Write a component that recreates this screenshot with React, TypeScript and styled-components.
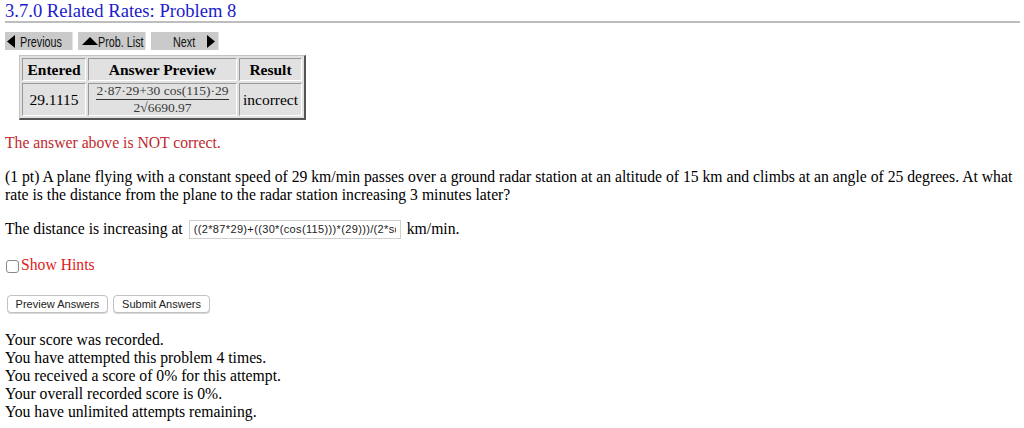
import React from 'react'
import styled, { createGlobalStyle } from 'styled-components'

const GlobalStyle = createGlobalStyle`
  html, body {
    margin: 0;
    padding: 0;
    background: #ffffff;
  }
  body {
    font-family: "Liberation Serif", "Times New Roman", serif;
    font-size: 15.7px;
    color: #000;
  }
`

const Page = styled.div`
  padding: 0 4px 0 5px;
`

const Title = styled.h1`
  margin: 0;
  padding-top: 1px;
  font-size: 18.6px;
  font-weight: normal;
  line-height: 20px;
  color: #1c1ccc;
  border-bottom: 2px solid #bdbdbd;
`

const NavBar = styled.div`
  display: flex;
  gap: 5px;
  margin-top: 9px;
`

const NavButton = styled.div<{ $pad?: number }>`
  width: 68px;
  height: 18px;
  box-sizing: border-box;
  background: #cacaca;
  border-right: 1px solid #e4e4e4;
  display: flex;
  align-items: center;
  padding: 0 2px 0 ${({ $pad }) => $pad ?? 2}px;
  font-family: "Liberation Sans", Arial, sans-serif;
  font-size: 15px;
  color: #111;
  white-space: nowrap;
`

const NavLabel = styled.span<{ $w: number }>`
  display: inline-block;
  width: ${({ $w }) => $w}px;
  transform: scaleX(0.72);
  transform-origin: left center;
`

const Arrow = styled.svg`
  flex: none;
  display: block;
`

const ResultTable = styled.table`
  margin: 5px 0 0 14px;
  border-collapse: separate;
  border-spacing: 2px;
  background: #e1e1e1;
  border-style: solid;
  border-width: 1px 2px 2px 1px;
  border-color: #c4c4c4 #555 #555 #c4c4c4;
`

const HeadCell = styled.th<{ $w: number }>`
  width: ${({ $w }) => $w}px;
  height: 23px;
  box-sizing: border-box;
  padding: 0;
  font-size: 15.5px;
  font-weight: bold;
  text-align: center;
  border-style: solid;
  border-width: 1px;
  border-color: #999 #fff #fff #999;
`

const Cell = styled.td`
  height: 31px;
  padding: 0 2px;
  font-size: 15.5px;
  text-align: center;
  border-style: solid;
  border-width: 1px;
  border-color: #999 #fff #fff #999;
`

const Fraction = styled.span`
  display: inline-flex;
  flex-direction: column;
  align-items: center;
  font-size: 13.5px;
  line-height: 14px;
  color: #3a3a3a;
  vertical-align: middle;
`

const Numerator = styled.span`
  padding: 0 1px 1px;
  border-bottom: 1px solid #333;
  white-space: nowrap;
`

const Denominator = styled.span`
  padding-top: 1px;
`

const Radical = styled.span`
  border-top: 1px solid #333;
  line-height: 12px;
`

const Warning = styled.p`
  margin: 14px 0 0;
  color: #c0282d;
  line-height: 18px;
`

const Problem = styled.p`
  margin: 16px 0 0;
  line-height: 18px;
`

const AnswerRow = styled.p`
  margin: 15px 0 0;
  line-height: 20px;
  display: flex;
  align-items: center;
`

const AnswerInput = styled.input`
  width: 212px;
  height: 19px;
  box-sizing: border-box;
  margin: 0 6px 0 6px;
  padding: 0 4px;
  border: 1px solid #cfcfcf;
  font-family: "Liberation Sans", Arial, sans-serif;
  font-size: 11px;
  letter-spacing: 0.35px;
  color: #222;
  outline: none;
`

const HintRow = styled.label`
  display: flex;
  align-items: center;
  margin-top: 17px;
  color: #e01b1b;
  font-size: 15.7px;
  line-height: 18px;
`

const Check = styled.span`
  width: 11px;
  height: 11px;
  margin: 2px 2px 0 1px;
  border: 1px solid #888;
  border-radius: 3px;
  background: #fff;
`

const ButtonRow = styled.div`
  display: flex;
  gap: 5px;
  margin: 21px 0 0 2px;
`

const FormButton = styled.button<{ $w: number }>`
  width: ${({ $w }) => $w}px;
  height: 18px;
  padding: 0;
  background: #fff;
  border: 1px solid #c2c2c2;
  border-radius: 4px;
  box-shadow: 0 1px 0 #d8d8d8;
  font-family: "Liberation Sans", Arial, sans-serif;
  font-size: 11px;
  color: #222;
`

const Messages = styled.div`
  margin-top: 18px;
  line-height: 18px;
`

export default function App() {
  return (
    <Page>
      <GlobalStyle />
      <Title>3.7.0 Related Rates: Problem 8</Title>
      <NavBar>
        <NavButton>
          <Arrow width="8" height="13" viewBox="0 0 8 13">
            <polygon points="8,0 8,13 0,6.5" fill="#000" />
          </Arrow>
          <NavLabel $w={48} style={{ marginLeft: 5 }}>Previous</NavLabel>
        </NavButton>
        <NavButton $pad={4}>
          <Arrow width="16" height="8" viewBox="0 0 16 8">
            <polygon points="0,8 16,8 8,0" fill="#000" />
          </Arrow>
          <NavLabel $w={48}>Prob. List</NavLabel>
        </NavButton>
        <NavButton $pad={22}>
          <NavLabel $w={30}>Next</NavLabel>
          <Arrow width="8" height="13" viewBox="0 0 8 13" style={{ marginLeft: 4 }}>
            <polygon points="0,0 0,13 8,6.5" fill="#000" />
          </Arrow>
        </NavButton>
      </NavBar>

      <ResultTable>
        <thead>
          <tr>
            <HeadCell $w={64}>Entered</HeadCell>
            <HeadCell $w={149}>Answer Preview</HeadCell>
            <HeadCell $w={63}>Result</HeadCell>
          </tr>
        </thead>
        <tbody>
          <tr>
            <Cell>29.1115</Cell>
            <Cell>
              <Fraction>
                <Numerator>2·87·29+30 cos(115)·29</Numerator>
                <Denominator>
                  2√<Radical>6690.97</Radical>
                </Denominator>
              </Fraction>
            </Cell>
            <Cell>incorrect</Cell>
          </tr>
        </tbody>
      </ResultTable>

      <Warning>The answer above is NOT correct.</Warning>

      <Problem>
        (1 pt) A plane flying with a constant speed of 29 km/min passes over a ground radar station at an
        altitude of 15 km and climbs at an angle of 25 degrees. At what rate is the distance from the plane to
        the radar station increasing 3 minutes later?
      </Problem>

      <AnswerRow>
        The distance is increasing at
        <AnswerInput readOnly value="((2*87*29)+((30*(cos(115)))*(29)))/(2*sqrt(6690.97))" />
        km/min.
      </AnswerRow>

      <HintRow>
        <Check />
        Show Hints
      </HintRow>

      <ButtonRow>
        <FormButton $w={101}>Preview Answers</FormButton>
        <FormButton $w={97}>Submit Answers</FormButton>
      </ButtonRow>

      <Messages>
        Your score was recorded.
        <br />
        You have attempted this problem 4 times.
        <br />
        You received a score of 0% for this attempt.
        <br />
        Your overall recorded score is 0%.
        <br />
        You have unlimited attempts remaining.
      </Messages>
    </Page>
  )
}
